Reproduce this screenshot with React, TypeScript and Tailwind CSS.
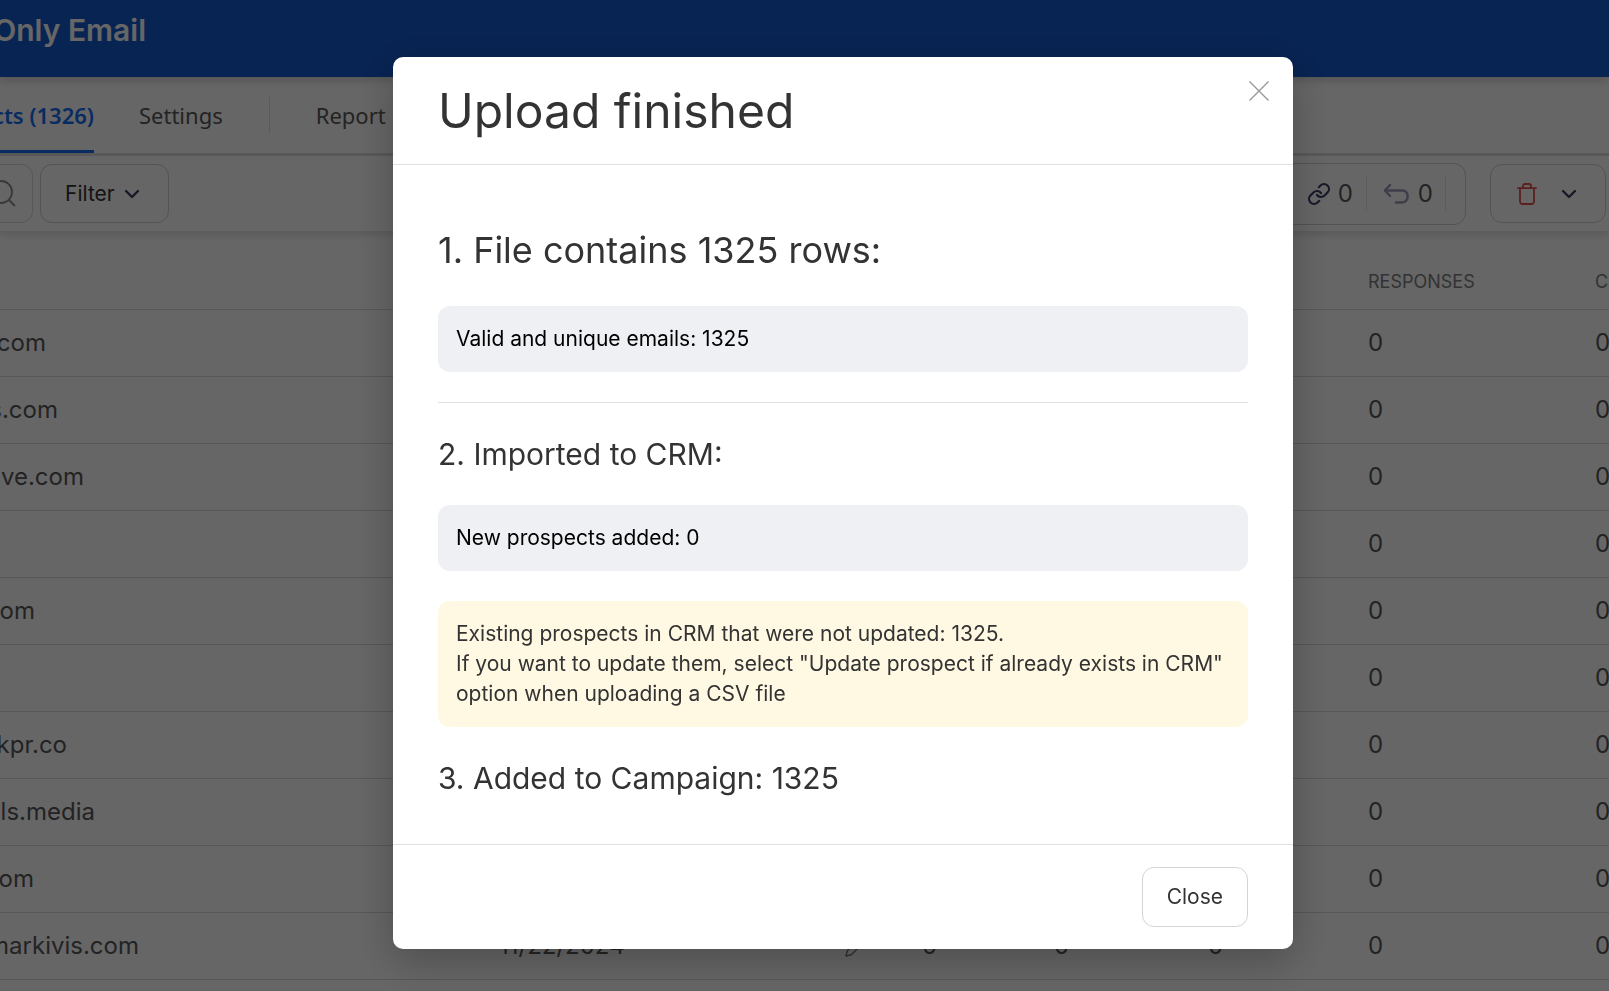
import type { ReactNode } from "react";
import { ChevronDown, Pencil } from "lucide-react";

type Prospect = {
  email: string;
  // how much of the first column is still in view after scrolling
  visible: number;
};

const prospects: Prospect[] = [
  { email: ".com", visible: 46 },
  { email: "s.com", visible: 58 },
  { email: "ave.com", visible: 84 },
  { email: "", visible: 0 },
  { email: "com", visible: 35 },
  { email: "", visible: 0 },
  { email: "kpr.co", visible: 67 },
  { email: "ls.media", visible: 95 },
  { email: "com", visible: 34 },
  { email: "markivis.com", visible: 139 },
];

const LinkIcon = () => (
  <svg
    width="24"
    height="24"
    viewBox="0 0 24 24"
    fill="none"
    stroke="#3b4066"
    strokeWidth="2.2"
    strokeLinecap="round"
    aria-hidden="true"
  >
    <path d="M10 13a5 5 0 0 0 7.54.54l3-3a5 5 0 0 0-7.07-7.07l-1.72 1.71" />
    <path d="M14 11a5 5 0 0 0-7.54-.54l-3 3a5 5 0 0 0 7.07 7.07l1.71-1.71" />
  </svg>
);

const ReplyIcon = () => (
  <svg
    width="26"
    height="22"
    viewBox="0 0 26 22"
    fill="none"
    stroke="#9a9cb8"
    strokeWidth="2.5"
    strokeLinecap="round"
    strokeLinejoin="round"
    aria-hidden="true"
  >
    <path d="M7 2 2 7.5 7 13" />
    <path d="M2 7.5h17a5 5 0 0 1 5.500 5.500a5.500 5.500 0 0 1-5.500 6.500h-6" />
  </svg>
);

const TrashIcon = () => (
  <svg
    width="20"
    height="22"
    viewBox="0 0 20 22"
    fill="none"
    stroke="#e0524c"
    strokeWidth="1.8"
    strokeLinecap="round"
    strokeLinejoin="round"
    aria-hidden="true"
  >
    <path d="M1 5.2h18" />
    <path d="M6 5V3a2 2 0 0 1 2-2h4a2 2 0 0 1 2 2v2" />
    <path d="M3 5.500v13a2.500 2.500 0 0 0 2.500 2.500h9a2.500 2.500 0 0 0 2.500-2.500v-13" />
  </svg>
);

const SearchIcon = () => (
  <svg
    width="28"
    height="28"
    viewBox="0 0 28 28"
    fill="none"
    stroke="#8c8c8c"
    strokeWidth="1.8"
    className="shrink-0"
    aria-hidden="true"
  >
    <circle cx="13" cy="12" r="11" />
    <path d="m20.500 19.500 6.500 6.500" />
  </svg>
);

const CloseIcon = () => (
  <svg
    width="20"
    height="20"
    viewBox="0 0 20 20"
    fill="none"
    stroke="#999"
    strokeWidth="1.4"
    aria-hidden="true"
  >
    <path d="m.5.5 19 19M19.500.5l-19 19" />
  </svg>
);

const Chevron = () => (
  <ChevronDown size={24} color="#3b4066" strokeWidth={2.4} aria-hidden="true" />
);

const Notice = ({
  className,
  children,
}: {
  className: string;
  children: ReactNode;
}) => (
  <div className={`rounded-xl p-[18px] text-[21px] leading-[30px] ${className}`}>
    {children}
  </div>
);

const Navbar = () => (
  <nav className="relative z-10 flex h-[79px] items-stretch border-b-3 border-[#dcdcdc] bg-white font-['Noto_Sans','Open_Sans',sans-serif] text-[22px] text-[#595959]">
    <a
      href="#prospects"
      className="flex w-[94px] items-center justify-end border-b-3 border-[#146ef5] pt-[3px] font-semibold whitespace-nowrap text-[#146ef5]"
    >
      cts (1326)
    </a>
    <a href="#settings" className="ml-[45px] flex items-center">
      Settings
    </a>
    <span className="mx-[46px] h-9 w-px self-center bg-[#e2e2e2]" />
    <a href="#report" className="flex items-center">
      Report
    </a>
  </nav>
);

const Toolbar = () => (
  <div className="relative flex h-[75px] items-center bg-white shadow-[0_3px_9px_rgba(0,0,0,0.15)]">
    <div className="flex h-[59px] w-[33px] items-center justify-end rounded-r-xl border border-l-0 border-[#dcdcdc] pr-4">
      <SearchIcon />
    </div>
    <button className="ml-[7px] flex h-[59px] items-center gap-[5px] rounded-xl border border-[#cfcfcf] pr-6 pl-6 text-[21px] text-[#333]">
      Filter
      <Chevron />
    </button>
    <div className="ml-auto flex h-[62px] items-center rounded-xl border border-[#cfcfd6] pr-[19px] pl-10 text-2xl text-[#595959]">
      <LinkIcon />
      <span className="ml-[7px]">0</span>
      <span className="mr-4 ml-[13px] h-9 w-px bg-[#e8e8e8]" />
      <ReplyIcon />
      <span className="ml-[9px]">0</span>
      <span className="ml-3 h-9 w-px bg-[#e8e8e8]" />
    </div>
    <button
      aria-label="Delete"
      className="mr-[3px] ml-6 flex h-[59px] items-center gap-5 rounded-xl border border-[#cfcfcf] pr-6 pl-[26px]"
    >
      <TrashIcon />
      <Chevron />
    </button>
  </div>
);

const ProspectsTable = () => (
  <table className="w-full table-fixed border-collapse text-left text-2xl text-[#595959]">
    <colgroup>
      <col className="w-[499px]" />
      <col className="w-[345px]" />
      <col className="w-[78px]" />
      <col className="w-[132px]" />
      <col className="w-[154px]" />
      <col className="w-[160px]" />
      <col className="w-[227px]" />
      <col />
    </colgroup>
    <thead>
      <tr className="h-[78px] border-b border-[#d9d9d9] text-lg text-[#808080]">
        <td colSpan={5} />
        <th scope="col" colSpan={2} className="pt-6 pl-[160px] font-normal">
          RESPONSES
        </th>
        <th scope="col" className="pt-6 font-normal">
          C
        </th>
      </tr>
    </thead>
    <tbody>
      {prospects.map((prospect, i) => (
        <tr key={i} className="h-[67px] border-b border-[#d9d9d9]">
          <td>
            <span
              className="flex justify-end overflow-hidden whitespace-nowrap"
              style={{ width: prospect.visible }}
            >
              {prospect.email}
            </span>
          </td>
          <td>11/22/2024</td>
          <td>
            <Pencil size={24} color="#808080" strokeWidth={1.5} />
          </td>
          <td>0</td>
          <td>0</td>
          <td>0</td>
          <td>0</td>
          <td>0</td>
        </tr>
      ))}
    </tbody>
  </table>
);

const UploadDialog = () => (
  <div
    role="dialog"
    aria-modal="true"
    aria-labelledby="upload-title"
    className="relative w-full max-w-[900px] rounded-[10px] bg-white text-[#333] shadow-[0_12px_42px_rgba(0,0,0,0.25)]"
  >
    <header className="flex h-[108px] items-center border-b border-[#e0e0e0] px-[45px]">
      <h1 id="upload-title" className="text-5xl">
        Upload finished
      </h1>
    </header>
    <button aria-label="Close dialog" className="absolute top-6 right-6">
      <CloseIcon />
    </button>

    <div className="px-[45px] pt-[65px] pb-12">
      <h2 className="text-4xl">1. File contains 1325 rows:</h2>
      <Notice className="mt-9 bg-[#eff0f4] text-black">
        Valid and unique emails: 1325
      </Notice>
      <hr className="my-[30px] border-[#e0e0e0]" />

      <h3 className="mt-[33px] text-3xl">2. Imported to CRM:</h3>
      <Notice className="mt-[33px] bg-[#eff0f4] text-black">
        New prospects added: 0
      </Notice>
      <Notice className="mt-[30px] bg-[#fff8e2]">
        Existing prospects in CRM that were not updated: 1325.
        <br />
        If you want to update them, select "Update prospect if already exists in
        CRM" option when uploading a CSV file
      </Notice>

      <h3 className="mt-[33px] text-3xl">3. Added to Campaign: 1325</h3>
    </div>

    <footer className="flex justify-end border-t border-[#e0e0e0] px-[45px] py-[22px]">
      <button className="h-[60px] rounded-xl border border-[#d4d4d4] px-6 text-[21px]">
        Close
      </button>
    </footer>
  </div>
);

const App = () => {
  return (
    <div className="h-screen overflow-hidden bg-white font-[Inter,sans-serif]">
      <header className="relative z-20 flex h-[77px] items-start bg-[#165acf] pt-3 shadow-[0_3px_9px_rgba(0,0,0,0.2)]">
        <span className="flex w-[146px] justify-end text-3xl font-semibold whitespace-nowrap text-white">
          Only Email
        </span>
      </header>
      <Navbar />
      <Toolbar />
      <ProspectsTable />

      <div className="fixed inset-0 z-30 flex items-start justify-center bg-black/60 pt-[57px] pl-[77px]">
        <UploadDialog />
      </div>
    </div>
  );
};

export default App;
